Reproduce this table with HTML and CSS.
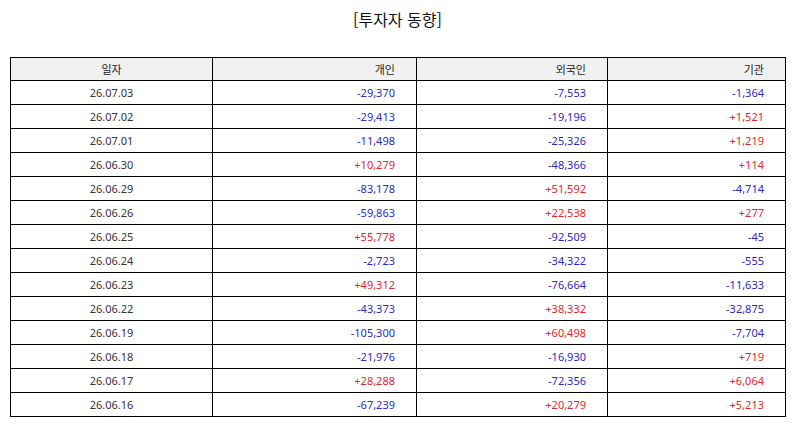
FILE: index.html
```html
<!DOCTYPE html>
<html lang="ko">
<head>
<meta charset="utf-8">
<title>투자자 동향</title>
<link rel="stylesheet" href="styles.css">
</head>
<body>
<div class="page">
  <h1 class="title">[투자자 동향]</h1>
  <table class="grid">
    <colgroup>
      <col class="c1"><col class="c2"><col class="c3"><col class="c4">
    </colgroup>
    <thead>
      <tr><th class="center">일자</th><th>개인</th><th>외국인</th><th>기관</th></tr>
    </thead>
    <tbody>
      <tr><td class="center">26.07.03</td><td class="dn">-29,370</td><td class="dn">-7,553</td><td class="dn">-1,364</td></tr>
      <tr><td class="center">26.07.02</td><td class="dn">-29,413</td><td class="dn">-19,196</td><td class="up">+1,521</td></tr>
      <tr><td class="center">26.07.01</td><td class="dn">-11,498</td><td class="dn">-25,326</td><td class="up">+1,219</td></tr>
      <tr><td class="center">26.06.30</td><td class="up">+10,279</td><td class="dn">-48,366</td><td class="up">+114</td></tr>
      <tr><td class="center">26.06.29</td><td class="dn">-83,178</td><td class="up">+51,592</td><td class="dn">-4,714</td></tr>
      <tr><td class="center">26.06.26</td><td class="dn">-59,863</td><td class="up">+22,538</td><td class="up">+277</td></tr>
      <tr><td class="center">26.06.25</td><td class="up">+55,778</td><td class="dn">-92,509</td><td class="dn">-45</td></tr>
      <tr><td class="center">26.06.24</td><td class="dn">-2,723</td><td class="dn">-34,322</td><td class="dn">-555</td></tr>
      <tr><td class="center">26.06.23</td><td class="up">+49,312</td><td class="dn">-76,664</td><td class="dn">-11,633</td></tr>
      <tr><td class="center">26.06.22</td><td class="dn">-43,373</td><td class="up">+38,332</td><td class="dn">-32,875</td></tr>
      <tr><td class="center">26.06.19</td><td class="dn">-105,300</td><td class="up">+60,498</td><td class="dn">-7,704</td></tr>
      <tr><td class="center">26.06.18</td><td class="dn">-21,976</td><td class="dn">-16,930</td><td class="up">+719</td></tr>
      <tr><td class="center">26.06.17</td><td class="up">+28,288</td><td class="dn">-72,356</td><td class="up">+6,064</td></tr>
      <tr><td class="center">26.06.16</td><td class="dn">-67,239</td><td class="up">+20,279</td><td class="up">+5,213</td></tr>
    </tbody>
  </table>
</div>
</body>
</html>
```

FILE: styles.css
```css
html, body {
  margin: 0;
  padding: 0;
  background: #ffffff;
}

.page {
  padding: 8px 9px 0 10px;
  font-family: "Noto Sans", "Noto Sans CJK KR", sans-serif;
  color: #333333;
}

.title {
  margin: 0 0 27px 0;
  text-align: center;
  font-family: "Noto Sans CJK KR", sans-serif;
  font-size: 16px;
  font-weight: normal;
  line-height: 22px;
  color: #111111;
}

.grid {
  border-collapse: collapse;
  table-layout: fixed;
  width: 775px;
  font-size: 11px;
}

.c1 { width: 202px; }
.c2 { width: 204px; }
.c3 { width: 191px; }
.c4 { width: 178px; }

.grid th,
.grid td {
  border: 1px solid #000000;
  padding: 0 21px 0 4px;
  text-align: right;
  font-weight: normal;
  white-space: nowrap;
}

.grid th {
  height: 22px;
  background: #f0f0f0;
  color: #222222;
}

.grid td {
  height: 23px;
}

.grid .center {
  text-align: center;
  padding: 0;
}

.grid .dn { color: #2b2bc4; }
.grid .up { color: #e0282e; }
```
